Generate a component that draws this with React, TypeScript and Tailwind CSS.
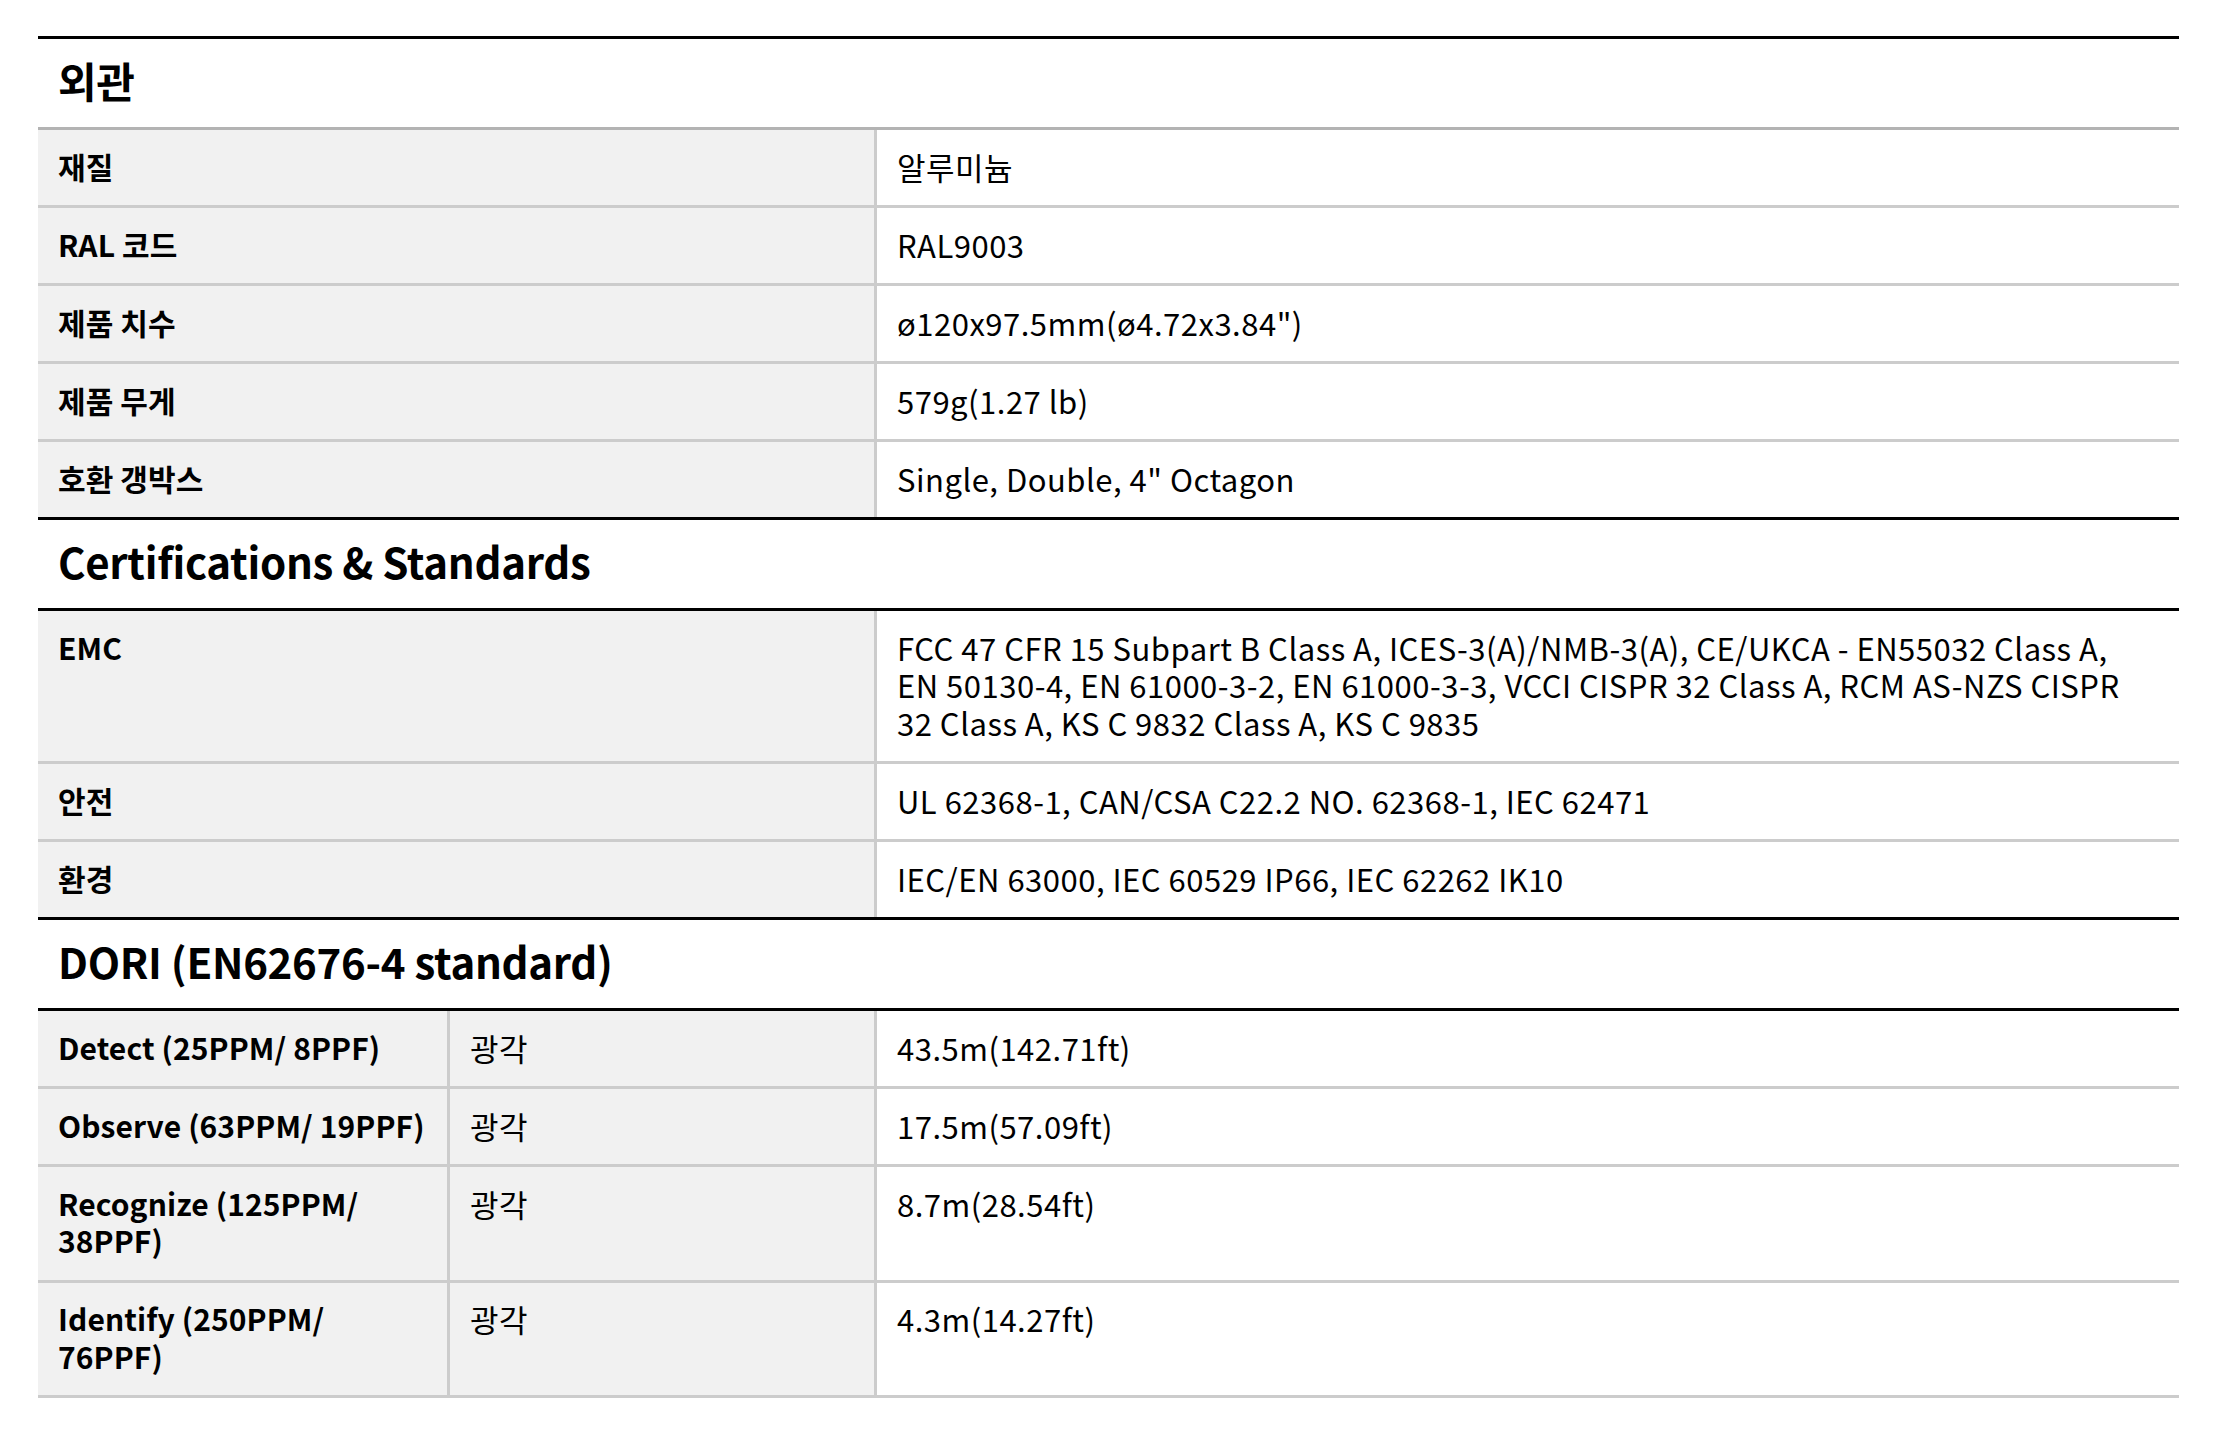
import React from 'react';

type Row = { label: string[]; mid?: string; value: string[] };
type Section = { title: string; headLine: string; rows: Row[]; bottom?: boolean };

const sections: Section[] = [
  {
    title: '외관',
    headLine: 'border-[#b3b3b3]',
    rows: [
      { label: ['재질'], value: ['알루미늄'] },
      { label: ['RAL 코드'], value: ['RAL9003'] },
      { label: ['제품 치수'], value: ['ø120x97.5mm(ø4.72x3.84")'] },
      { label: ['제품 무게'], value: ['579g(1.27 lb)'] },
      { label: ['호환 갱박스'], value: ['Single, Double, 4" Octagon'] },
    ],
  },
  {
    title: 'Certifications & Standards',
    headLine: 'border-black',
    rows: [
      {
        label: ['EMC'],
        value: [
          'FCC 47 CFR 15 Subpart B Class A, ICES-3(A)/NMB-3(A), CE/UKCA - EN55032 Class A,',
          'EN 50130-4, EN 61000-3-2, EN 61000-3-3, VCCI CISPR 32 Class A, RCM AS-NZS CISPR',
          '32 Class A, KS C 9832 Class A, KS C 9835',
        ],
      },
      { label: ['안전'], value: ['UL 62368-1, CAN/CSA C22.2 NO. 62368-1, IEC 62471'] },
      { label: ['환경'], value: ['IEC/EN 63000, IEC 60529 IP66, IEC 62262 IK10'] },
    ],
  },
  {
    title: 'DORI (EN62676-4 standard)',
    headLine: 'border-black',
    bottom: true,
    rows: [
      { label: ['Detect (25PPM/ 8PPF)'], mid: '광각', value: ['43.5m(142.71ft)'] },
      { label: ['Observe (63PPM/ 19PPF)'], mid: '광각', value: ['17.5m(57.09ft)'] },
      { label: ['Recognize (125PPM/', '38PPF)'], mid: '광각', value: ['8.7m(28.54ft)'] },
      { label: ['Identify (250PPM/', '76PPF)'], mid: '광각', value: ['4.3m(14.27ft)'] },
    ],
  },
];

const cell = 'whitespace-nowrap px-[20px] pt-[17.5px] pb-[20px] leading-[37.5px]';
const shaded = 'shrink-0 border-r-[3px] border-[#cccccc] bg-[#f1f1f1]';

const Lines = ({ lines }: { lines: string[] }) => (
  <>
    {lines.map((line) => (
      <div key={line}>{line}</div>
    ))}
  </>
);

const App = () => {
  return (
    <div
      className="min-h-screen bg-white pt-[36px] text-black"
      style={{ fontFamily: '"Noto Sans CJK KR", "Noto Sans", sans-serif' }}
    >
      <div className="ml-[38px] w-[2141px]">
        {sections.map((section) => (
          <section key={section.title} className="border-t-[3px] border-black">
            <h2
              className={`flex h-[91px] items-center border-b-[3px] px-[20px] pb-[7px] text-[42px] font-bold tracking-[-0.3px] ${section.headLine}`}
            >
              {section.title}
            </h2>
            <div className={section.bottom ? 'border-b-[3px] border-[#cccccc]' : ''}>
              {section.rows.map((row, i) => (
                <div
                  key={row.label[0]}
                  className={`flex text-[31px] ${i > 0 ? 'border-t-[3px] border-[#cccccc]' : ''}`}
                >
                  {row.mid ? (
                    <>
                      <div className={`${cell} ${shaded} w-[412px] text-[30px] font-bold tracking-[0.1px]`}>
                        <Lines lines={row.label} />
                      </div>
                      <div className={`${cell} ${shaded} w-[427px] tracking-[0.4px]`}>{row.mid}</div>
                    </>
                  ) : (
                    <div className={`${cell} ${shaded} w-[839px] text-[30px] font-bold tracking-[0.1px]`}>
                      <Lines lines={row.label} />
                    </div>
                  )}
                  <div className={`${cell} flex-1 tracking-[0.5px]`}>
                    <Lines lines={row.value} />
                  </div>
                </div>
              ))}
            </div>
          </section>
        ))}
      </div>
    </div>
  );
};

export default App;
